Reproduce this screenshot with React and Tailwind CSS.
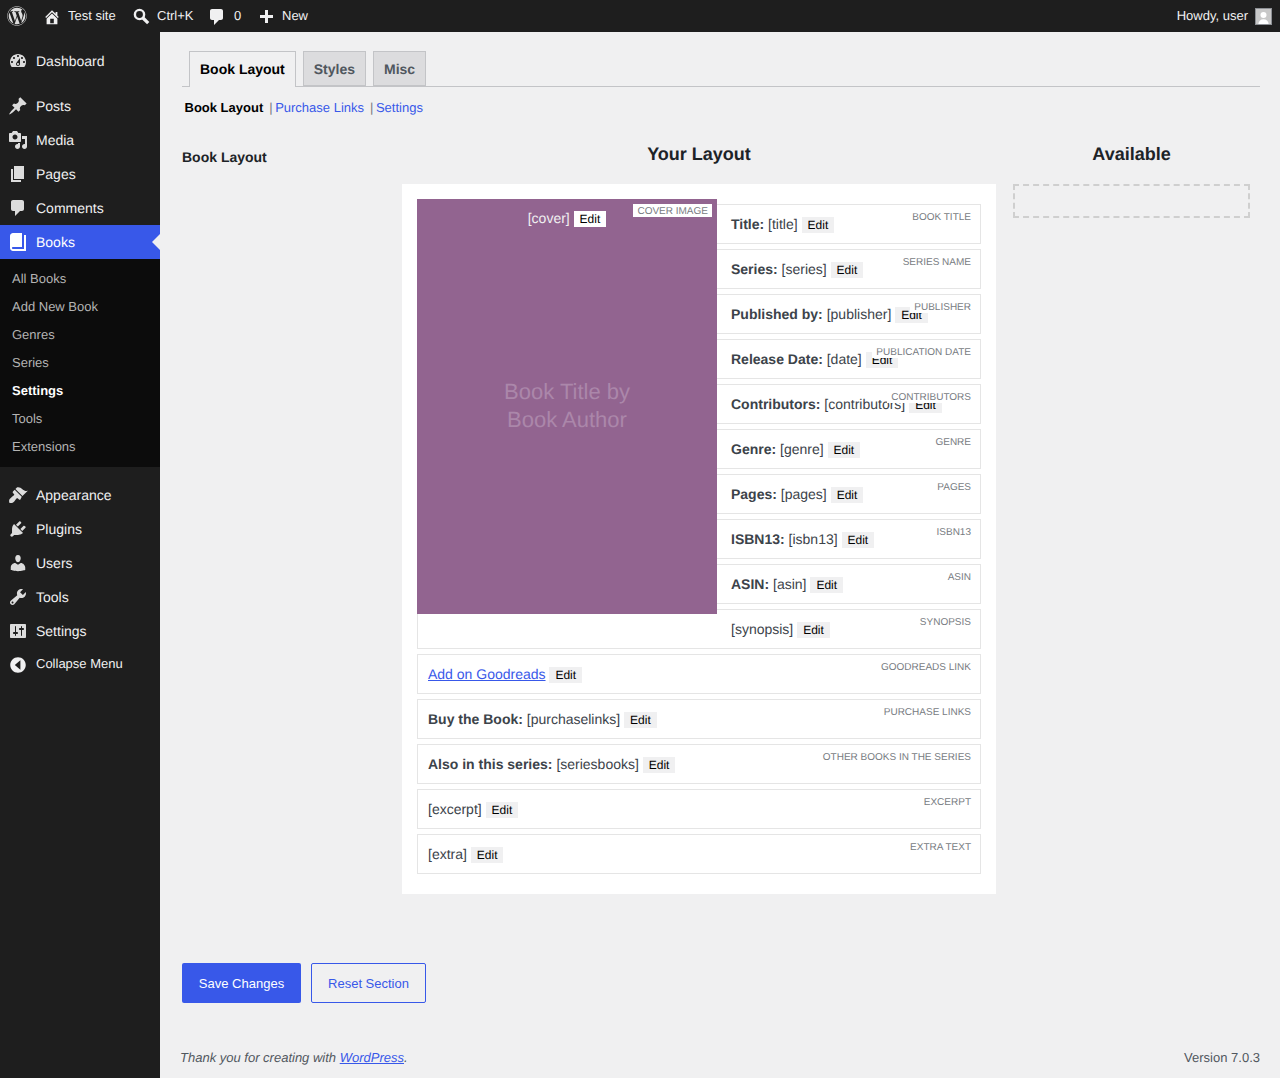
import React from "react";
import { FaWordpress } from "react-icons/fa";

const P = {
  home: "M16 8.5l1.53 1.53-1.06 1.06L10 4.62l-6.47 6.47-1.06-1.06L10 2.5l4 4v-2h2v4zm-6-2.46l6 5.99V18H4v-5.97zM12 17v-5H8v5h4z",
  comment: "M5 2h9c1.1 0 2 .9 2 2v7c0 1.1-.9 2-2 2h-2l-5 5v-5H5c-1.1 0-2-.9-2-2V4c0-1.1.9-2 2-2z",
  plus: "M17 7v3h-5v5H9v-5H4V7h5V2h3v5h5z",
  dashboard: "M3.76 16h12.48c1.1-1.37 1.76-3.11 1.76-5 0-4.42-3.58-8-8-8s-8 3.58-8 8c0 1.89.66 3.63 1.76 5zM10 4c.55 0 1 .45 1 1s-.45 1-1 1-1-.45-1-1 .45-1 1-1zM6 6c.55 0 1 .45 1 1s-.45 1-1 1-1-.45-1-1 .45-1 1-1zm8 0c.55 0 1 .45 1 1s-.45 1-1 1-1-.45-1-1 .45-1 1-1zm-5.37 5.55L12 7v6c0 1.1-.9 2-2 2s-2-.9-2-2c0-.57.24-1.08.63-1.45zM4 10c.55 0 1 .45 1 1s-.45 1-1 1-1-.45-1-1 .45-1 1-1zm12 0c.55 0 1 .45 1 1s-.45 1-1 1-1-.45-1-1 .45-1 1-1zm-5 3c0-.55-.45-1-1-1s-1 .45-1 1 .45 1 1 1 1-.45 1-1z",
  posts: "M10.44 3.02l1.82-1.82 6.36 6.35-1.83 1.82c-1.05-.68-2.48-.57-3.41.36l-.75.75c-.92.93-1.04 2.35-.35 3.41l-1.83 1.82-2.41-2.41-2.8 2.79c-.42.42-3.38 2.71-3.8 2.29s1.86-3.39 2.28-3.81l2.79-2.79L4.1 9.36l1.83-1.82c1.05.69 2.48.57 3.4-.36l.75-.75c.93-.92 1.05-2.35.36-3.41z",
  media: "M13 11V4c0-.55-.45-1-1-1h-1.67L9 1H5L3.67 3H2c-.55 0-1 .45-1 1v7c0 .55.45 1 1 1h10c.55 0 1-.45 1-1zM7 4.5c1.38 0 2.5 1.12 2.5 2.5S8.38 9.5 7 9.5 4.5 8.38 4.5 7 5.62 4.5 7 4.5zM14 6h5v10.5c0 1.38-1.12 2.5-2.5 2.5S14 17.88 14 16.5s1.12-2.5 2.5-2.5c.17 0 .34.02.5.05V9h-3V6zm-4 8.05V13h2v3.5c0 1.38-1.12 2.5-2.5 2.5S7 17.88 7 16.5 8.12 14 9.5 14c.17 0 .34.02.5.05z",
  pages: "M6 15V2h10v13H6zm-1 1h8v2H3V5h2v11z",
  book: "M16 3h2v16H5c-1.66 0-3-1.34-3-3V4c0-1.66 1.34-3 3-3h9v14H5c-.55 0-1 .45-1 1s.45 1 1 1h11V3z",
  appearance: "M14.48 11.06L7.41 3.99l1.5-1.5c.5-.56 2.3-.47 3.51.32 1.21.8 1.43 1.28 2.91 2.1 1.18.64 2.45 1.26 4.45.85zm-.71.71L6.7 4.7 4.93 6.47c-.39.39-.39 1.02 0 1.41l1.06 1.06c.39.39.39 1.03 0 1.42-.6.6-1.43 1.11-2.21 1.69-.35.26-.7.53-1.01.84C1.43 13.71.96 14.9 1.1 16.4c.03.4.1.97.29 1.29.25.1.8.2 1.2.2 1.4.1 2.6-.4 3.4-1.2.31-.31.58-.66.84-1.01.58-.78 1.09-1.61 1.69-2.21.39-.39 1.03-.39 1.42 0l1.06 1.06c.39.39 1.02.39 1.41 0z",
  plugins: "M13.11 4.36L9.87 7.6 8 5.73l3.24-3.24c.35-.34 1.05-.2 1.56.32.52.51.66 1.21.31 1.55zm-8 1.77l.91-1.12 9.01 9.01-1.19.84c-.71.71-2.63 1.16-3.82 1.16H6.14L4.9 17.26c-.59.59-1.54.59-2.12 0-.59-.58-.59-1.53 0-2.12l1.24-1.24v-3.88c0-1.13.4-3.19 1.09-3.89zm7.26 3.97l3.24-3.24c.34-.35 1.04-.21 1.55.31.52.51.66 1.21.31 1.55l-3.24 3.25z",
  users: "M10 9.25c-2.27 0-2.73-3.44-2.73-3.44C7 4.02 7.82 2 9.97 2c2.16 0 2.98 2.02 2.71 3.81 0 0-.41 3.44-2.68 3.44zm0 2.57L12.72 10c2.39 0 4.52 2.33 4.52 4.53v2.49s-3.65 1.13-7.24 1.13c-3.65 0-7.24-1.13-7.24-1.13v-2.49c0-2.25 1.94-4.48 4.47-4.48z",
  tools: "M16.68 9.77c-1.34 1.34-3.3 1.67-4.95.99l-5.41 6.52c-.99.99-2.59.99-3.58 0s-.99-2.59 0-3.57l6.52-5.42c-.68-1.65-.35-3.61.99-4.95 1.28-1.28 3.12-1.62 4.72-1.06l-2.89 2.89 2.82 2.82 2.86-2.87c.53 1.58.18 3.39-1.08 4.65zM3.81 16.21c.4.39 1.04.39 1.43 0 .4-.4.4-1.04 0-1.43-.39-.4-1.03-.4-1.43 0-.39.39-.39 1.03 0 1.43z",
  settings: "M18 16V4c0-.55-.45-1-1-1H3c-.55 0-1 .45-1 1v12c0 .55.45 1 1 1h14c.55 0 1-.45 1-1zM8 11h1c.55 0 1 .45 1 1s-.45 1-1 1H8v1.5c0 .28-.22.5-.5.5s-.5-.22-.5-.5V13H6c-.55 0-1-.45-1-1s.45-1 1-1h1V5.5c0-.28.22-.5.5-.5s.5.22.5.5V11zm5-2h-1c-.55 0-1-.45-1-1s.45-1 1-1h1V5.5c0-.28.22-.5.5-.5s.5.22.5.5V7h1c.55 0 1 .45 1 1s-.45 1-1 1h-1v5.5c0 .28-.22.5-.5.5s-.5-.22-.5-.5V9z",
  collapse: "M10 .3c5.4 0 9.7 4.3 9.7 9.7s-4.3 9.7-9.7 9.7S.3 15.4.3 10 4.6.3 10 .3zM13 4l-7 6 7 6V4z",
};

function Dash({ d, className = "w-5 h-5" }) {
  return (
    <svg viewBox="0 0 20 20" className={className + " shrink-0"} fill="currentColor" fillRule="evenodd">
      <path d={d} />
    </svg>
  );
}

function BarItem({ children, className = "" }) {
  return <div className={"flex items-center h-8 " + className}>{children}</div>;
}

function MenuRow({ icon, label, active }) {
  return (
    <div
      className={
        "relative flex items-center h-[34px] pl-2 gap-2 text-sm " +
        (active ? "bg-[#3858e9] text-white" : "text-[#f0f0f1]")
      }
    >
      <Dash d={icon} className={"w-5 h-5 " + (active ? "text-white" : "text-[#dcdcdc]")} />
      <span>{label}</span>
      {active && (
        <span className="absolute right-0 top-[9px] w-0 h-0 border-y-8 border-y-transparent border-r-8 border-r-[#f0f0f1]" />
      )}
    </div>
  );
}

function CollapseRow() {
  return (
    <div className="flex items-center h-[34px] pl-[10px] gap-[10px] text-[13px] text-[#f0f0f1]">
      <Dash d={P.collapse} className="w-4 h-4 text-[#f0f0f1]" />
      <span className="-mt-[2px]">Collapse Menu</span>
    </div>
  );
}

function Sidebar() {
  const sub = ["All Books", "Add New Book", "Genres", "Series", "Settings", "Tools", "Extensions"];
  return (
    <aside className="w-40 shrink-0 bg-[#1e1e1e] pt-3">
      <MenuRow icon={P.dashboard} label="Dashboard" />
      <div className="h-[11px]" />
      <MenuRow icon={P.posts} label="Posts" />
      <MenuRow icon={P.media} label="Media" />
      <MenuRow icon={P.pages} label="Pages" />
      <MenuRow icon={P.comment} label="Comments" />
      <MenuRow icon={P.book} label="Books" active />
      <ul className="bg-[#0c0c0c] py-[6px] text-[13px]">
        {sub.map((s) => (
          <li
            key={s}
            className={
              "h-7 pl-3 flex items-center " +
              (s === "Settings" ? "font-bold text-white" : "text-[#b4b4b4]")
            }
          >
            {s}
          </li>
        ))}
      </ul>
      <div className="h-[11px]" />
      <MenuRow icon={P.appearance} label="Appearance" />
      <MenuRow icon={P.plugins} label="Plugins" />
      <MenuRow icon={P.users} label="Users" />
      <MenuRow icon={P.tools} label="Tools" />
      <MenuRow icon={P.settings} label="Settings" />
      <CollapseRow />
    </aside>
  );
}

function AdminBar() {
  return (
    <header className="h-8 bg-[#1e1e1e] text-[#f0f0f1] text-[13px] flex items-center justify-between">
      <div className="flex items-center">
        <BarItem className="pl-[7px] w-[44px]">
          <FaWordpress className="w-5 h-5 text-[#dcdcdc]" />
        </BarItem>
        <BarItem className="w-[89px]">
          <Dash d={P.home} className="w-[18px] h-[18px] -ml-[1px] mt-[1px] text-[#f0f0f1]" />
          <span className="ml-[7px]">Test site</span>
        </BarItem>
        <BarItem className="w-[77px]">
          <svg viewBox="0 0 20 20" className="w-5 h-5 -ml-[2px] shrink-0 text-[#f0f0f1]" fill="none" stroke="currentColor">
            <circle cx="8.5" cy="8.5" r="4.6" strokeWidth="2.4" />
            <path d="M12 12l5.2 5.2" strokeWidth="3.2" />
          </svg>
          <span className="ml-[6px]">Ctrl+K</span>
        </BarItem>
        <BarItem className="w-[49px]">
          <Dash d={P.comment} className="w-5 h-5 -ml-[3px] mt-[1px] text-[#f0f0f1]" />
          <span className="ml-[7px]">0</span>
        </BarItem>
        <BarItem>
          <Dash d={P.plus} className="w-5 h-5 -ml-[3px] mt-1 text-[#f0f0f1]" />
          <span className="ml-[6px]">New</span>
        </BarItem>
      </div>
      <div className="flex items-center pr-2">
        <span>Howdy, user</span>
        <span className="ml-[7px] w-[17px] h-[17px] bg-[#c8c8c8] border border-[#8c8f94] overflow-hidden flex items-end justify-center">
          <svg viewBox="0 0 16 16" className="w-[15px] h-[15px]" fill="#fff">
            <circle cx="8" cy="6.5" r="3.2" />
            <path d="M2.5 16c.3-3.6 2.6-5.2 5.5-5.2s5.2 1.6 5.5 5.2z" />
          </svg>
        </span>
      </div>
    </header>
  );
}

function EditBtn({ light }) {
  return (
    <span
      className={
        "inline-block h-4 px-[6px] text-[12px] leading-4 text-black align-[0px] " +
        (light ? "bg-white" : "bg-[#f0f0f1]")
      }
    >
      Edit
    </span>
  );
}

function Label({ children }) {
  return (
    <span className="absolute top-[5px] right-[5px] h-[13px] bg-white px-[4px] text-[10px] leading-[15px] uppercase text-[#787c82] whitespace-nowrap">
      {children}
    </span>
  );
}

function Row({ label, strong, code, beside, link }) {
  return (
    <div
      className={
        "relative h-10 bg-white border border-[#e5e5e5] text-sm text-[#3c434a] leading-[38px] pr-2 whitespace-nowrap " +
        (beside ? "pl-[313px]" : "pl-[10px]")
      }
    >
      {link && <a className="text-[#3858e9] underline">{link}</a>}
      {strong && <strong className="font-bold">{strong}</strong>}
      {strong && " "}
      {code}
      {code || link ? " " : ""}
      <EditBtn />
      <Label>{label}</Label>
    </div>
  );
}

const sideRows = [
  ["Book Title", "Title:", "[title]"],
  ["Series Name", "Series:", "[series]"],
  ["Publisher", "Published by:", "[publisher]"],
  ["Publication Date", "Release Date:", "[date]"],
  ["Contributors", "Contributors:", "[contributors]"],
  ["Genre", "Genre:", "[genre]"],
  ["Pages", "Pages:", "[pages]"],
  ["ISBN13", "ISBN13:", "[isbn13]"],
  ["ASIN", "ASIN:", "[asin]"],
  ["Synopsis", null, "[synopsis]"],
];

const fullRows = [
  ["Goodreads Link", null, null, "Add on Goodreads"],
  ["Purchase Links", "Buy the Book:", "[purchaselinks]"],
  ["Other Books in the Series", "Also in this series:", "[seriesbooks]"],
  ["Excerpt", null, "[excerpt]"],
  ["Extra Text", null, "[extra]"],
];

function Cover() {
  return (
    <div className="absolute left-0 -top-[5px] z-10 w-[300px] h-[415px] bg-[#926490] text-center flex items-center justify-center">
      <div className="absolute top-[11px] inset-x-0 text-sm leading-4 text-[#f0f0f1]">
        [cover] <EditBtn light />
      </div>
      <Label>Cover Image</Label>
      <div className="-mt-[1px] text-[22px] leading-[28px] text-[#ab87aa]">
        Book Title by
        <br />
        Book Author
      </div>
    </div>
  );
}

function Main() {
  return (
    <main className="flex-1 min-w-0 bg-[#f0f0f1] pl-5 pr-5 flex flex-col">
      <div className="ml-[2px] mt-[19px] h-9 pl-[7px] flex gap-[7px] border-b border-[#c3c4c7]">
        <div className="h-9 px-[10px] border border-b-0 border-[#c3c4c7] bg-[#f0f0f1] text-sm font-bold text-black leading-[34px]">
          Book Layout
        </div>
        <div className="h-[35px] px-[10px] border border-[#c3c4c7] bg-[#dcdcde] text-sm font-bold text-[#50575e] leading-[34px]">
          Styles
        </div>
        <div className="h-[35px] w-[53px] text-center border border-[#c3c4c7] bg-[#dcdcde] text-sm font-bold text-[#50575e] leading-[34px]">
          Misc
        </div>
      </div>
      <div className="ml-[4.5px] mt-3 h-[18px] text-[13px] leading-[18px] flex">
        <span className="font-bold text-black">Book Layout</span>
        <span className="ml-[6px] text-[#787c82]">|</span>
        <a className="ml-[2.5px] text-[#3858e9]">Purchase Links</a>
        <span className="ml-[6px] text-[#787c82]">|</span>
        <a className="ml-[2.5px] text-[#3858e9]">Settings</a>
      </div>
      <div className="flex mt-[26px]">
        <div className="w-[222px] shrink-0 pl-[2px] pt-[4px] text-sm font-bold text-[#1d2327] leading-[20px]">
          Book Layout
        </div>
        <div className="w-[594px] shrink-0">
          <h2 className="h-[24px] -mt-[1px] text-center text-lg font-bold leading-[24px] text-[#1d2327]">Your Layout</h2>
          <div className="mt-[18px] bg-white px-[15px] py-5">
            <div className="relative flex flex-col gap-[5px]">
              <Cover />
              {sideRows.map((r) => (
                <Row key={r[0]} label={r[0]} strong={r[1]} code={r[2]} beside />
              ))}
              {fullRows.map((r) => (
                <Row key={r[0]} label={r[0]} strong={r[1]} code={r[2]} link={r[3]} />
              ))}
            </div>
          </div>
        </div>
        <div className="ml-[17px] w-[237px] shrink-0">
          <h2 className="h-[24px] -mt-[1px] text-center text-lg font-bold leading-[24px] text-[#1d2327]">Available</h2>
          <div className="mt-[18px] h-[34px] border-2 border-dashed border-[#cfcfcf]" />
        </div>
      </div>
      <div className="ml-[2px] mt-[69px] flex gap-[10px] text-[13px]">
        <button className="h-10 w-[119px] pt-px bg-[#3858e9] rounded-[2px] text-white">Save Changes</button>
        <button className="h-10 w-[115px] pt-px border border-[#3858e9] rounded-[2px] text-[#3858e9]">Reset Section</button>
      </div>
      <footer className="mt-[46px] h-[18px] text-[13px] leading-[18px] text-[#50575e] flex justify-between">
        <span className="italic">
          Thank you for creating with <a className="text-[#3858e9] underline">WordPress</a>.
        </span>
        <span>Version 7.0.3</span>
      </footer>
    </main>
  );
}

export default function App() {
  return (
    <div className="h-[1078px] overflow-hidden flex flex-col bg-[#f0f0f1] [text-rendering:geometricPrecision] font-['Liberation_Sans',Arial,sans-serif]">
      <AdminBar />
      <div className="flex flex-1 min-h-0">
        <Sidebar />
        <Main />
      </div>
    </div>
  );
}
